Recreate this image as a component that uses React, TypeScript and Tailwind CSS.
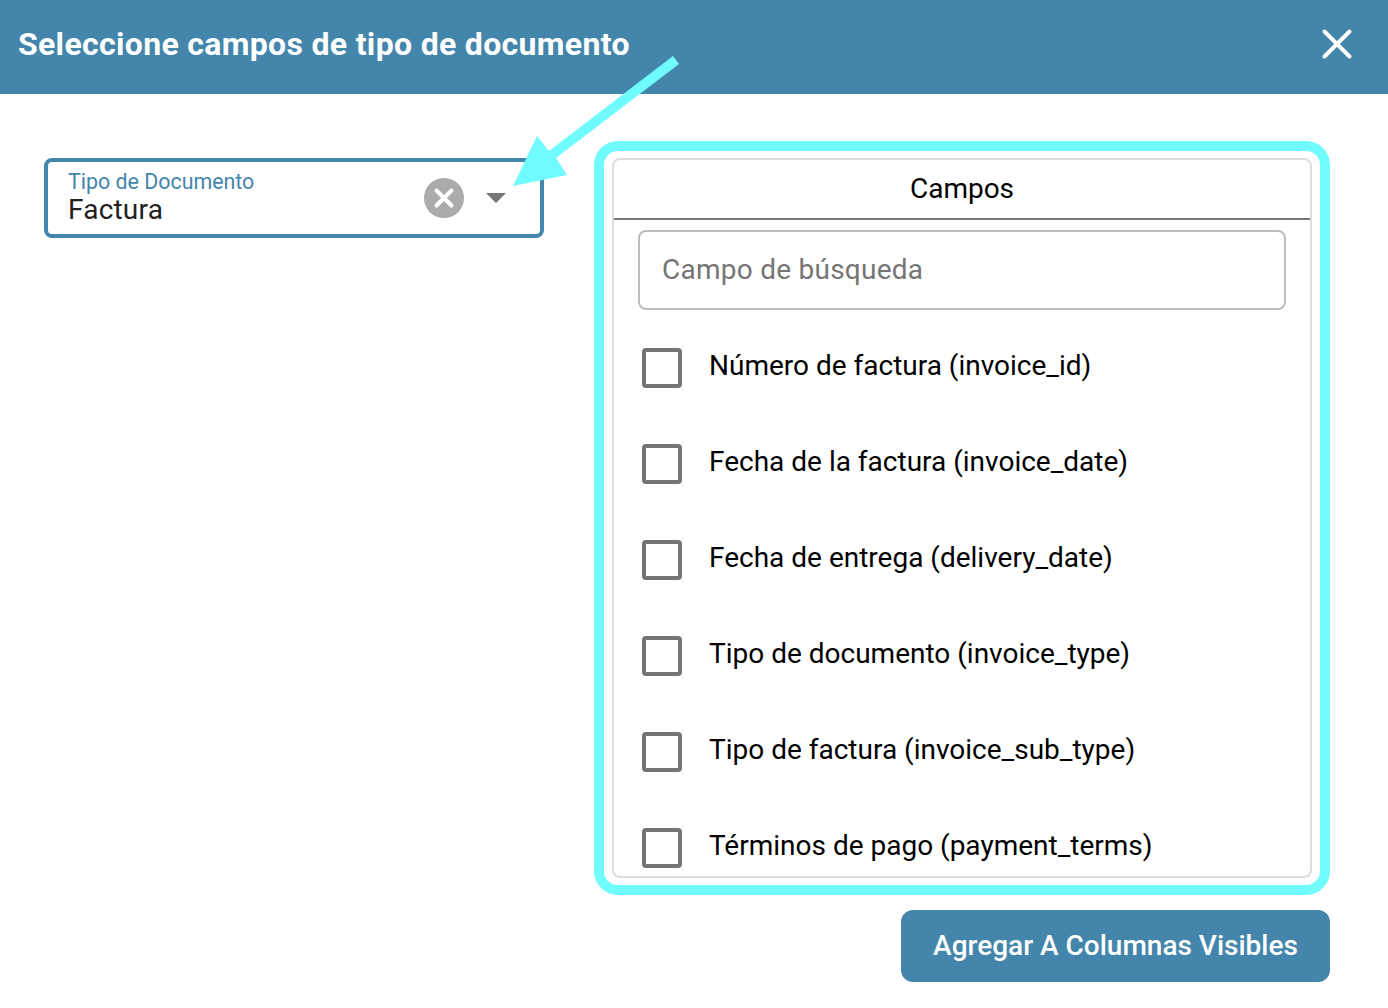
import { FC } from 'react';
import { X } from 'lucide-react';

const fields = [
  'Número de factura (invoice_id)',
  'Fecha de la factura (invoice_date)',
  'Fecha de entrega (delivery_date)',
  'Tipo de documento (invoice_type)',
  'Tipo de factura (invoice_sub_type)',
  'Términos de pago (payment_terms)',
];

const FieldRow: FC<{ label: string }> = ({ label }) => (
  <div className="flex h-[96px] shrink-0 items-start pl-[28px]">
    <span className="mt-[38px] h-[40px] w-[40px] shrink-0 rounded-[4px] border-[4px] border-[#757575] bg-white" />
    <span className="ml-[27px] mt-[38px] text-[28px] leading-[36px] text-black">{label}</span>
  </div>
);

export default function App() {
  return (
    <div className="relative h-[1008px] w-[1388px] overflow-hidden bg-white font-['Roboto',sans-serif]">
      <header className="flex h-[94px] items-center justify-between bg-[#4486ab] pb-[6px] pl-[18px] pr-[26px]">
        <h1 className="text-[32px] font-bold leading-[40px] tracking-[0.32px] text-white">Seleccione campos de tipo de documento</h1>
        <X size={50} strokeWidth={1.9} className="text-white" />
      </header>

      <main className="flex items-start pl-[44px] pr-[58px] pt-[47px]">
        <div className="mt-[17px] flex h-[80px] w-[500px] shrink-0 items-center rounded-[8px] border-[4px] border-[#4486ab] pl-[20px] pr-[34px]">
          <div className="flex-1 pb-[2px]">
            <div className="text-[21.4px] leading-[26px] text-[#4486ab]">Tipo de Documento</div>
            <div className="text-[28px] leading-[30px] tracking-[0.2px] text-[#212121]">Factura</div>
          </div>
          <span className="flex h-[40px] w-[40px] items-center justify-center rounded-full bg-[#ababab]">
            <X size={30} strokeWidth={3.2} className="text-white" />
          </span>
          <svg width="20" height="10" viewBox="0 0 20 10" className="ml-[22px]">
            <polygon points="0,0 20,0 10,10" fill="#757575" />
          </svg>
        </div>

        <div className="ml-[50px] flex flex-1 flex-col items-end">
          <div className="h-[754px] w-full rounded-[24px] border-[10px] border-[#70fbff] px-[8px] py-[7px]">
            <div className="flex h-full flex-col overflow-hidden rounded-[8px] border-2 border-[#dddddd]">
              <div className="flex h-[60px] shrink-0 items-center justify-center border-b-2 border-[#757575] text-[28px] text-black">
                Campos
              </div>
              <div className="mx-[24px] mt-[10px] flex h-[80px] shrink-0 items-center rounded-[8px] border-2 border-[#bdbdbd] pl-[22px] text-[28px] tracking-[0.25px] text-[#757575]">
                Campo de búsqueda
              </div>
              {fields.map((field) => (
                <FieldRow key={field} label={field} />
              ))}
            </div>
          </div>
          <button className="mt-[15px] flex h-[72px] w-[429px] items-center justify-center rounded-[12px] bg-[#4486ab] text-[28px] font-medium text-white">
            Agregar A Columnas Visibles
          </button>
        </div>
      </main>

      {/* callout arrow drawn over the page */}
      <svg width="1388" height="300" viewBox="0 0 1388 300" className="pointer-events-none absolute left-0 top-0">
        <polygon
          points="673,56 679,64 556,158 567,175 513,186 537,136 549,151"
          fill="#70fbff"
        />
      </svg>
    </div>
  );
}
